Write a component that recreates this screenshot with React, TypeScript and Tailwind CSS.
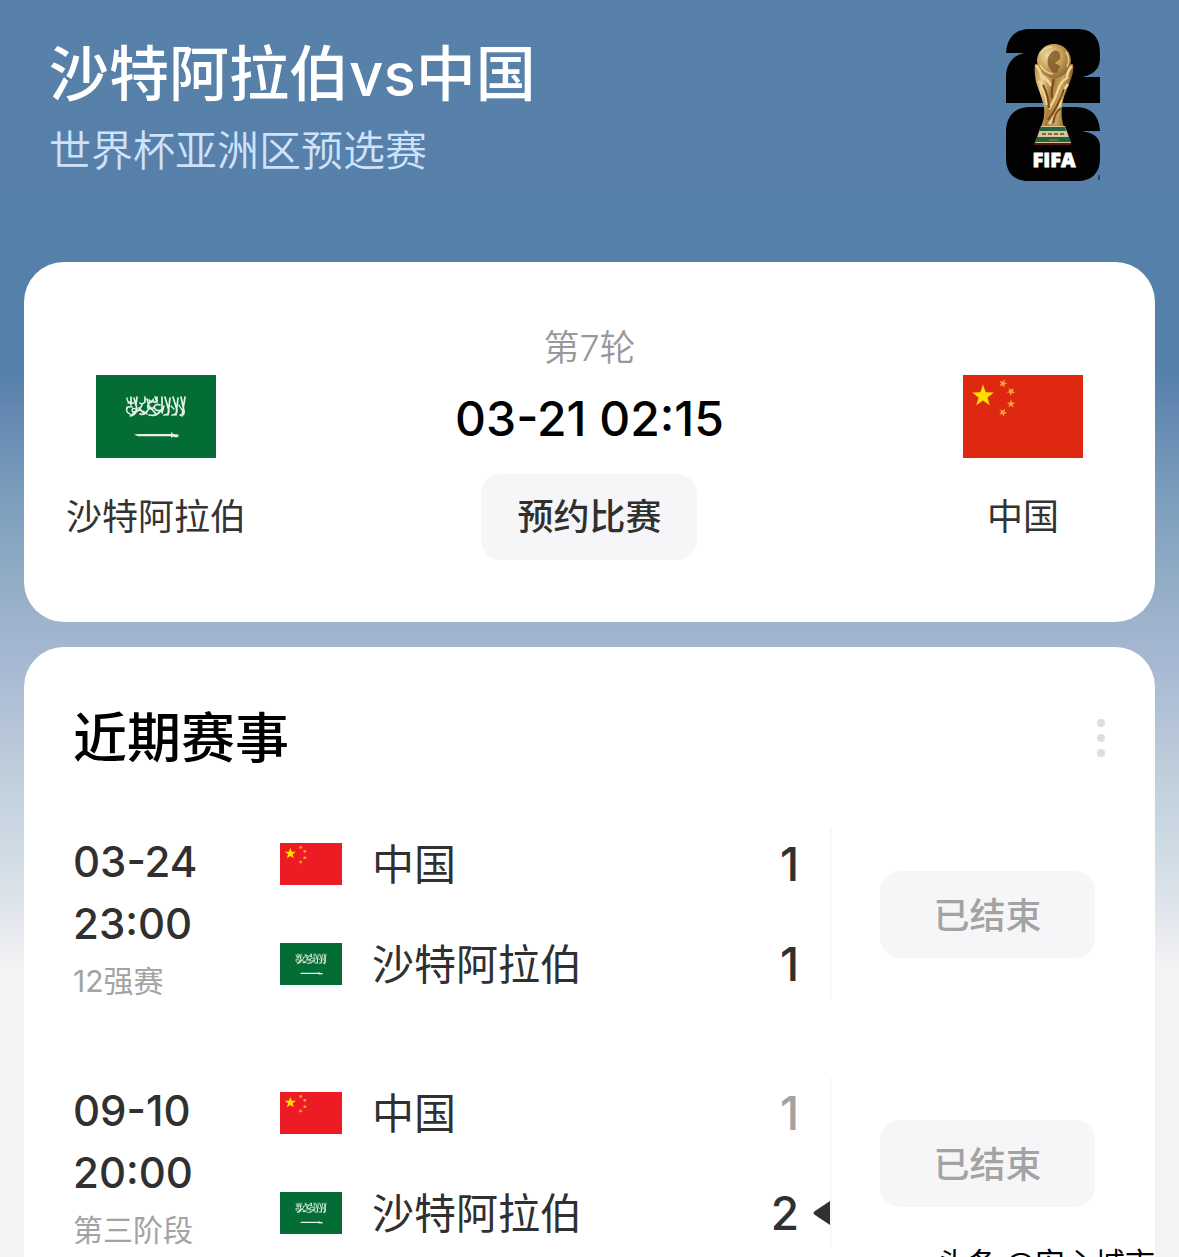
import React from "react";

type Country = "cn" | "sa";

const NAMES: Record<Country, string> = { cn: "中国", sa: "沙特阿拉伯" };

function star(cx: number, cy: number, r: number, turn: number) {
  const pts: string[] = [];
  for (let i = 0; i < 10; i++) {
    const a = ((turn + i * 36 - 90) * Math.PI) / 180;
    const d = i % 2 === 0 ? r : r * 0.4;
    pts.push(`${(cx + d * Math.cos(a)).toFixed(2)},${(cy + d * Math.sin(a)).toFixed(2)}`);
  }
  return pts.join(" ");
}

function Flag({ country, className, red = "#de2910" }: { country: Country; className: string; red?: string }) {
  if (country === "cn") {
    return (
      <svg viewBox="0 0 120 83" preserveAspectRatio="none" className={className} role="img" aria-label="中国国旗">
        <rect width="120" height="83" fill={red} />
        <polygon points={star(20, 21, 11.5, 0)} fill="#ffde00" />
        <g fill="#fba83a">
          <polygon points={star(40, 8.5, 4.4, 20)} />
          <polygon points={star(48, 16.5, 4.4, 40)} />
          <polygon points={star(48, 29, 4.4, 0)} />
          <polygon points={star(40, 37.5, 4.4, 25)} />
        </g>
      </svg>
    );
  }
  return (
    <svg viewBox="0 0 120 83" preserveAspectRatio="none" className={className} role="img" aria-label="沙特阿拉伯国旗">
      <rect width="120" height="83" fill="#046c35" />
      <g fill="none" stroke="#e4f3e6" strokeWidth="1.7" strokeLinecap="round">
        <path d="M89 22l-3 19M85 22l3 14q1 5-4 4M82 23l-2 17M77 22l4 13q0 5-5 5M74 23l-2 17M69 22l4 14q0 4-5 4M66 22v15" />
        <path d="M64 30q-5-2-6 3 3 4 7 2-4 7-12 5M59 22l2 5M54 32l6 7M56 27q-5 1-4 6 3 2 6-1M51 24l2 7M52 35q-4 6-8 4" />
        <path d="M61 22v4q-3 3-4-1-2 3-4 0M49 22v5q-3 3-5 1M46 30q-3 7-9 8M43 33l5 6M41 22l-1 8M38 23l3 11q-1 5-6 6M35 22v8" />
        <path d="M31 23q0 5 4 4M31 32q-2 5 3 7M36 32q-5-1-5 2M40 34q-4-2-4 2 3 2 5-1-2 6-7 6M83 30l3 5M75 31l3 3M68 31l-2 7M32 28h6M47 36l4 3" strokeWidth="1.4" />
      </g>
      <path d="M38 59.6L42 59h33v-1.6h1.5V59l6 .6v2l-2 .8-4-.8V62.600H75v-1.400H42z" fill="#e4f3e6" />
    </svg>
  );
}

function CupEmblem({ className }: { className: string }) {
  return (
    <svg viewBox="0 0 96 154" className={className} role="img" aria-label="FIFA 2026">
      <defs>
        <linearGradient id="gold" x1="0" x2="1" y1="0" y2="0.25">
          <stop offset="0" stopColor="#b58a4d" />
          <stop offset="0.25" stopColor="#e9cd8c" />
          <stop offset="0.5" stopColor="#a97c3c" />
          <stop offset="0.75" stopColor="#c9a25b" />
          <stop offset="1" stopColor="#7d5322" />
        </linearGradient>
        <radialGradient id="globe" cx="0.35" cy="0.35" r="0.75">
          <stop offset="0" stopColor="#f3dfa6" />
          <stop offset="0.5" stopColor="#c7a059" />
          <stop offset="1" stopColor="#86602b" />
        </radialGradient>
      </defs>
      <path d="M1 25C2 9 11 1 24 1H72C87 1 95 9 95 25V30C95 40 89 47 77 49H95V75H1V49C1 36 8 27 20 25Z" fill="#020202" />
      <path d="M1 104C1 88 10 79 25 79H71C86 79 94 87 95 103H77C89 105 95 110 95 118V130C95 145 87 153 72 153H24C9 153 1 145 1 130Z" fill="#020202" />
      <path d="M30 36C29 42 30 48 31 54C34 63 37 69 39 79C40 88 38 94 36 99H59C57 92 56 87 57 79C58 68 63 60 66 51C68 45 69 41 68 36L62 36L36 38Z" fill="url(#gold)" />
      <circle cx="49" cy="33" r="17" fill="url(#globe)" />
      <path d="M47 24c6-4 9 1 8 7l-5 4 5 3-3 7-5-1c-6-7-6-15 0-20z" fill="#7c5626" opacity="0.8" />
      <path d="M35 26q5-7 12-7M35 37q5 8 13 9M61 24q5 7 1 15" stroke="#f4dfa5" strokeWidth="1.5" fill="none" opacity="0.8" />
      <path d="M31 37q4 5 6 12 7 3 9 9M67 38q-5 5-5 12-7 4-9 12-3 10-9 19M34 53q6 8 8 24M63 56q-7 8-8 22-3 8-11 18" stroke="#f0d695" strokeWidth="2.5" fill="none" />
      <path d="M49 51q-3 11-2 19M59 61q-5 16-16 31M38 57q5 9 6 23M56 80q-6 4-8 15" stroke="#7a4a1e" strokeWidth="2" fill="none" />
      <path d="M36 98H60L66 115H30Z" fill="#d6c797" />
      <path d="M35 99H60L61 103H34ZM32 109H64L66 114H30Z" fill="#236342" />
      <path d="M37 106h4m2 0h4m2 0h4m2 0h4M44 112h9" stroke="#776a49" strokeWidth="2" />
      <path d="M29 116H66" stroke="#6b241b" strokeWidth="1.5" />
      <text x="49" y="139" textAnchor="middle" fontFamily="'Open Sans', sans-serif" fontWeight="800" fontSize="20" fill="#fff" stroke="#fff" strokeWidth="0.8">
        FIFA
      </text>
      <path d="M94 147v5" stroke="#20364c" strokeWidth="1.5" />
    </svg>
  );
}

interface Match {
  date: string;
  time: string;
  stage: string;
  sides: { country: Country; score: number; lost?: boolean; won?: boolean }[];
}

const MATCHES: Match[] = [
  {
    date: "03-24",
    time: "23:00",
    stage: "12强赛",
    sides: [
      { country: "cn", score: 1 },
      { country: "sa", score: 1 },
    ],
  },
  {
    date: "09-10",
    time: "20:00",
    stage: "第三阶段",
    sides: [
      { country: "cn", score: 1, lost: true },
      { country: "sa", score: 2, won: true },
    ],
  },
];

function Team({ country }: { country: Country }) {
  return (
    <div className="flex w-[184px] flex-col items-center gap-8">
      <Flag country={country} className="h-[83px] w-[120px]" />
      <span className="text-[36px] leading-[54px] whitespace-nowrap text-[#333]">{NAMES[country]}</span>
    </div>
  );
}

function MatchRow({ match }: { match: Match }) {
  return (
    <li className="flex h-[170px] items-center">
      <div className="w-[207px] shrink-0 self-start pt-[2px] text-[#303030]">
        <time className="block text-[42px] leading-[62px] font-medium">
          {match.date}
          <br />
          {match.time}
        </time>
        <div className="text-[30px] leading-[52px] text-[#a3a3a3]">{match.stage}</div>
      </div>
      <div className="flex h-full flex-1 flex-col border-r-2 border-[#f7f7f8] pt-[2px]">
        {match.sides.map((s) => (
          <div key={s.country} className="mb-[34px] flex h-[66px] items-center">
            <Flag country={s.country} className="h-[42px] w-[62px]" red="#ed1c24" />
            <span className="ml-[30px] flex-1 text-[42px] whitespace-nowrap text-[#303030]">{NAMES[s.country]}</span>
            <span className={s.lost ? "text-[46px] font-medium text-[#a3a3a3]" : "text-[46px] font-medium text-[#303030]"}>
              {s.score}
            </span>
            <span className="flex w-[31px] justify-end">
              {s.won && (
                <svg viewBox="0 0 17 24" className="h-6 w-[17px]" role="img" aria-label="胜">
                  <path d="M17 0V24L2 14Q-1 12 2 10Z" fill="#303030" />
                </svg>
              )}
            </span>
          </div>
        ))}
      </div>
      <button className="mr-[60px] ml-12 h-[87px] w-[215px] shrink-0 rounded-[20px] bg-[#f6f6f8] pt-1 text-[36px] font-medium text-[#a3a3a3]">
        已结束
      </button>
    </li>
  );
}

export default function App() {
  return (
    <main
      lang="zh-CN"
      className="relative flex h-screen flex-col overflow-hidden bg-[#f2f3f5] bg-[linear-gradient(180deg,#5881aa_0px,#5480a9_368px,#6388b1_407px,#7b9dbc_492px,#8ba9c3_558px,#9fb3cc_623px,#acbdd6_689px,#bccad9_754px,#cfdce5_852px,#e3e6ec_918px,#f2f3f5_964px)] px-6 font-[Inter,'Noto_Sans_CJK_SC',sans-serif]"
    >
      <header className="flex h-[262px] shrink-0 items-start justify-between pt-7 pr-[54px] pl-[25px]">
        <div>
          <h1 className="text-[60px] leading-[92px] font-medium text-white">沙特阿拉伯vs中国</h1>
          <p className="text-[42px] leading-[62px] font-[350] text-[#cfe2fb]">世界杯亚洲区预选赛</p>
        </div>
        <CupEmblem className="h-[154px] w-24" />
      </header>

      <section className="flex h-[360px] shrink-0 items-start justify-between rounded-[40px] bg-white px-10">
        <div className="pt-[113px]">
          <Team country="sa" />
        </div>
        <div className="flex flex-col items-center pt-[60px]">
          <span className="text-[36px] leading-[52px] font-[350] text-[#999]">第7轮</span>
          <time className="text-[48px] leading-[90px] font-medium text-black">03-21 02:15</time>
          <button className="mt-[10px] h-[86px] w-[216px] rounded-[20px] bg-[#f6f6f8] text-[36px] font-medium text-[#303030]">
            预约比赛
          </button>
        </div>
        <div className="pt-[113px]">
          <Team country="cn" />
        </div>
      </section>

      <section className="mt-[25px] shrink-0 rounded-t-[40px] bg-white pl-[49px]">
        <div className="flex h-[182px] items-center justify-between pr-9">
          <h2 className="text-[54px] font-medium text-black">近期赛事</h2>
          <button aria-label="更多" className="flex w-9 flex-col items-center gap-[7px]">
            <i className="size-2 rounded-full bg-[#dedede]" />
            <i className="size-2 rounded-full bg-[#dedede]" />
            <i className="size-2 rounded-full bg-[#dedede]" />
          </button>
        </div>
        <ul className="flex flex-col gap-[79px] pb-20">
          {MATCHES.map((m) => (
            <MatchRow key={m.date} match={m} />
          ))}
        </ul>
      </section>

      <div className="absolute right-6 -bottom-7 text-[30px] leading-[44px] whitespace-nowrap text-black">头条 @安心城市</div>
    </main>
  );
}
